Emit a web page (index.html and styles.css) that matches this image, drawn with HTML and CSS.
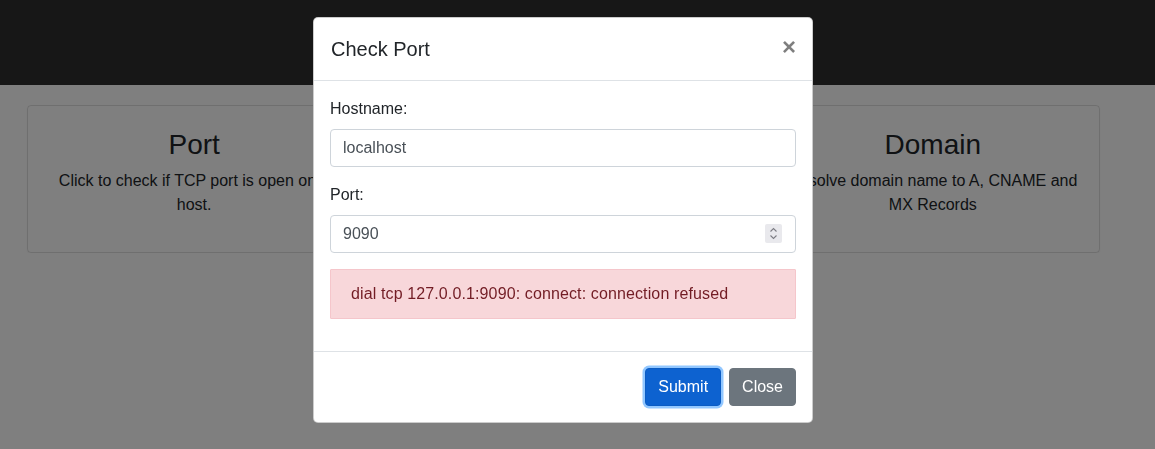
FILE: index.html
```html
<!DOCTYPE html>
<html lang="en">
<head>
<meta charset="utf-8">
<title>Check Port</title>
<link rel="stylesheet" href="styles.css">
</head>
<body>
  <nav class="navbar"></nav>
  <main class="cards">
    <section class="card">
      <h3 class="card-title">Port</h3>
      <p class="card-text">Click to check if TCP port is open on a host.</p>
    </section>
    <section class="card">
      <h3 class="card-title">IP</h3>
      <p class="card-text">Show your public IP address and location.</p>
    </section>
    <section class="card">
      <h3 class="card-title">Domain</h3>
      <p class="card-text">Resolve domain name to A, CNAME and MX Records</p>
    </section>
  </main>

  <div class="backdrop"></div>

  <div class="modal">
    <div class="modal-header">
      <h5 class="modal-title">Check Port</h5>
      <button class="close" type="button">×</button>
    </div>
    <div class="modal-body">
      <div class="form-group">
        <label class="label">Hostname:</label>
        <input class="form-control" type="text" value="localhost">
      </div>
      <div class="form-group">
        <label class="label">Port:</label>
        <div class="number-wrap">
          <input class="form-control" type="text" value="9090">
          <span class="spinner">
            <svg width="17" height="19" viewBox="0 0 17 19"><polyline points="5.5,7.5 8.5,4.5 11.5,7.5" fill="none" stroke="#7d7d84" stroke-width="1.1"/><polyline points="5.5,11.5 8.5,14.5 11.5,11.5" fill="none" stroke="#7d7d84" stroke-width="1.1"/></svg>
          </span>
        </div>
      </div>
      <div class="alert">dial tcp 127.0.0.1:9090: connect: connection refused</div>
    </div>
    <div class="modal-footer">
      <button class="btn btn-primary" type="button">Submit</button>
      <button class="btn btn-secondary" type="button">Close</button>
    </div>
  </div>
</body>
</html>
```

FILE: styles.css
```css
* { box-sizing: border-box; }

body {
  margin: 0;
  font-family: "Liberation Sans", Arial, Helvetica, sans-serif;
  font-size: 16px;
  line-height: 1.5;
  color: #212529;
  background: #fff;
}

.navbar {
  height: 85px;
  background: #2e2e2e;
}

.cards {
  display: grid;
  grid-template-columns: repeat(3, 1fr);
  gap: 35px;
  width: 1100px;
  padding-left: 27px;
  margin-top: 20px;
}

.card {
  border: 1px solid rgba(0, 0, 0, 0.13);
  border-radius: 4px;
  padding: 21px 20px 19px;
  text-align: center;
  box-shadow: 0 1px 2px rgba(0, 0, 0, 0.06);
}

.card-title {
  margin: 0 0 8px;
  font-size: 28px;
  font-weight: 500;
  line-height: 1.2;
  position: relative;
  top: 1px;
}

.card-text {
  margin: 0 0 16px;
}

.backdrop {
  position: fixed;
  inset: 0;
  background: rgba(0, 0, 0, 0.5);
}

.modal {
  position: absolute;
  left: 313px;
  top: 17px;
  width: 500px;
  background: #fff;
  border: 1px solid rgba(0, 0, 0, 0.2);
  border-radius: 5px;
  display: flex;
  flex-direction: column;
}

.modal-header {
  display: flex;
  align-items: flex-start;
  justify-content: space-between;
  padding: 16px;
  border-bottom: 1px solid #dee2e6;
}

.modal-title {
  margin: 0;
  font-size: 20px;
  font-weight: 500;
  line-height: 1.5;
  position: relative;
  left: 1px;
}

.close {
  border: 0;
  background: transparent;
  padding: 16px;
  margin: -16px -16px -16px auto;
  font-family: "Liberation Sans", Arial, sans-serif;
  font-size: 24px;
  font-weight: 700;
  line-height: 1;
  color: #000;
  opacity: 0.5;
  position: relative;
  top: 1px;
}

.modal-body {
  padding: 16px;
}

.form-group {
  margin-bottom: 16px;
}

.label {
  display: block;
  margin-bottom: 8px;
}

.form-control {
  display: block;
  width: 100%;
  height: 38px;
  padding: 6px 12px;
  font-family: inherit;
  font-size: 16px;
  line-height: 1.5;
  color: #495057;
  background: #fff;
  border: 1px solid #ced4da;
  border-radius: 4px;
  outline: none;
}

.number-wrap {
  position: relative;
}

.spinner {
  position: absolute;
  right: 14px;
  top: 9px;
  width: 17px;
  height: 19px;
  background: #e9e9ed;
  border-radius: 2px;
  display: flex;
}

.alert {
  padding: 12px 20px;
  margin-bottom: 16px;
  color: #721c24;
  background: #f8d7da;
  border: 1px solid #f5c6cb;
  border-radius: 1px;
  letter-spacing: 0.12px;
}

.modal-footer {
  display: flex;
  justify-content: flex-end;
  align-items: center;
  gap: 8px;
  padding: 16px;
  border-top: 1px solid #dee2e6;
}

.btn {
  font-family: inherit;
  font-size: 16px;
  line-height: 1.5;
  padding: 6px 12px;
  border-radius: 4px;
  border: 1px solid transparent;
  color: #fff;
}

.btn-primary {
  background: #0d62d0;
  border-color: #0b5cc4;
  box-shadow: 0 0 0 2.5px rgba(38, 143, 255, 0.5);
}

.btn-secondary {
  background: #6c757d;
  border-color: #6c757d;
}
```
